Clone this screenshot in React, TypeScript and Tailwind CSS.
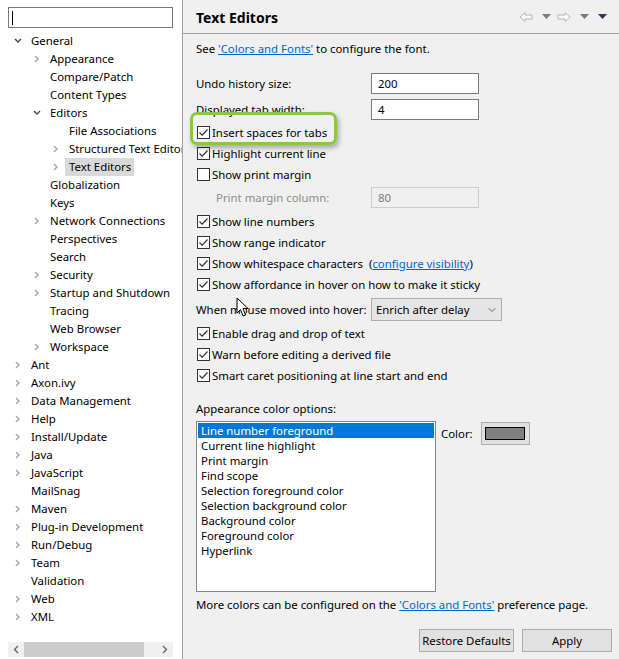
import { ChevronDown } from "lucide-react";

type TreeItem = {
  label: string;
  level: number;
  arrow: "open" | "closed" | "none";
  selected?: boolean;
};

const tree: TreeItem[] = [
  { label: "General", level: 0, arrow: "open" },
  { label: "Appearance", level: 1, arrow: "closed" },
  { label: "Compare/Patch", level: 1, arrow: "none" },
  { label: "Content Types", level: 1, arrow: "none" },
  { label: "Editors", level: 1, arrow: "open" },
  { label: "File Associations", level: 2, arrow: "none" },
  { label: "Structured Text Editors", level: 2, arrow: "closed" },
  { label: "Text Editors", level: 2, arrow: "closed", selected: true },
  { label: "Globalization", level: 1, arrow: "none" },
  { label: "Keys", level: 1, arrow: "none" },
  { label: "Network Connections", level: 1, arrow: "closed" },
  { label: "Perspectives", level: 1, arrow: "none" },
  { label: "Search", level: 1, arrow: "none" },
  { label: "Security", level: 1, arrow: "closed" },
  { label: "Startup and Shutdown", level: 1, arrow: "closed" },
  { label: "Tracing", level: 1, arrow: "none" },
  { label: "Web Browser", level: 1, arrow: "none" },
  { label: "Workspace", level: 1, arrow: "closed" },
  { label: "Ant", level: 0, arrow: "closed" },
  { label: "Axon.ivy", level: 0, arrow: "closed" },
  { label: "Data Management", level: 0, arrow: "closed" },
  { label: "Help", level: 0, arrow: "closed" },
  { label: "Install/Update", level: 0, arrow: "closed" },
  { label: "Java", level: 0, arrow: "closed" },
  { label: "JavaScript", level: 0, arrow: "closed" },
  { label: "MailSnag", level: 0, arrow: "none" },
  { label: "Maven", level: 0, arrow: "closed" },
  { label: "Plug-in Development", level: 0, arrow: "closed" },
  { label: "Run/Debug", level: 0, arrow: "closed" },
  { label: "Team", level: 0, arrow: "closed" },
  { label: "Validation", level: 0, arrow: "none" },
  { label: "Web", level: 0, arrow: "closed" },
  { label: "XML", level: 0, arrow: "closed" },
];

const colorOptions = [
  "Line number foreground",
  "Current line highlight",
  "Print margin",
  "Find scope",
  "Selection foreground color",
  "Selection background color",
  "Background color",
  "Foreground color",
  "Hyperlink",
];

const indent = ["pl-[12px]", "pl-[31px]", "pl-[50px]"];

function Arrow({ kind }: { kind: TreeItem["arrow"] }) {
  if (kind === "none") return <span className="w-[19px] shrink-0" />;
  if (kind === "open")
    return (
      <svg className="w-[19px] h-[18px] shrink-0" viewBox="0 0 19 18">
        <path d="M3 7 L6 10 L9 7" fill="none" stroke="#404040" strokeWidth="1.3" />
      </svg>
    );
  return (
    <svg className="w-[19px] h-[18px] shrink-0" viewBox="0 0 19 18">
      <path d="M4 6 L7 9 L4 12" fill="none" stroke="#a6a6a6" strokeWidth="1.4" />
    </svg>
  );
}

function Check({ checked = true, label, children }: { checked?: boolean; label: string; children?: React.ReactNode }) {
  return (
    <div className="flex h-[21px] items-center">
      <span className="ml-[1px] flex h-[13px] w-[13px] shrink-0 items-center justify-center border border-[#333] bg-white">
        {checked && (
          <svg width="11" height="11" viewBox="0 0 11 11">
            <path d="M1.5 5.5 L4.2 8.2 L9.5 2.5" fill="none" stroke="#333" strokeWidth="1.2" />
          </svg>
        )}
      </span>
      <span className="ml-[2px] whitespace-nowrap">{label}</span>
      {children}
    </div>
  );
}

function NavArrow({ flip }: { flip?: boolean }) {
  return (
    <svg width="14" height="12" viewBox="0 0 14 12" className={flip ? "-scale-x-100" : ""}>
      <path d="M1 6 L6 1.5 L6 4 L13 4 L13 8 L6 8 L6 10.5 Z" fill="#fafafa" stroke="#b4b4b4" strokeWidth="1" />
    </svg>
  );
}

function SmallDrop({ color = "#7a7a7a" }: { color?: string }) {
  return (
    <svg width="9" height="5" viewBox="0 0 9 5">
      <path d="M0 0 L9 0 L4.5 5 Z" fill={color} />
    </svg>
  );
}

export default function App() {
  return (
    <div className="relative flex h-[659px] w-[619px] overflow-hidden bg-[#f0f0f0] text-[11.4px] text-black [font-family:'Noto_Sans',sans-serif]">
      {/* left tree pane */}
      <div className="flex h-full w-[183px] shrink-0 flex-col overflow-hidden border-r border-[#a0a0a0] bg-white">
        <div className="ml-[8px] mt-[7px] flex h-[21px] w-[165px] shrink-0 items-center border border-[#7a7a7a] bg-white pl-[3px]">
          <span className="h-[14px] w-px bg-black" />
        </div>
        <div className="mt-[4px] flex flex-col">
          {tree.map((item) => (
            <div key={item.label} className={`flex h-[18px] items-center ${indent[item.level]}`}>
              <Arrow kind={item.arrow} />
              <span
                className={`whitespace-nowrap leading-[18px] ${item.selected ? "bg-[#d9d9d9] pl-[4px] pr-[3px] -ml-[4px]" : ""}`}
              >
                {item.label}
              </span>
            </div>
          ))}
        </div>
        <div className="mt-auto mb-[2px] ml-[8px] flex h-[15px] w-[165px] shrink-0 items-center bg-[#f0f0f0]">
          <span className="flex w-[16px] justify-center">
            <svg width="6" height="9" viewBox="0 0 6 9">
              <path d="M5 1 L1.5 4.5 L5 8" fill="none" stroke="#606060" strokeWidth="1.3" />
            </svg>
          </span>
          <span className="h-[15px] w-[120px] bg-[#cdcdcd]" />
          <span className="ml-auto flex w-[16px] justify-center">
            <svg width="6" height="9" viewBox="0 0 6 9">
              <path d="M1 1 L4.5 4.5 L1 8" fill="none" stroke="#606060" strokeWidth="1.3" />
            </svg>
          </span>
        </div>
      </div>

      {/* right preference page */}
      <div className="flex min-w-0 flex-1 flex-col">
        <div className="flex h-[34px] shrink-0 items-center border-b border-[#a0a0a0] pl-[13px] pr-[12px]">
          <span className="mt-[2px] text-[14px] font-bold">Text Editors</span>
          <div className="ml-auto flex items-center">
            <NavArrow />
            <span className="ml-[9px]"><SmallDrop /></span>
            <span className="ml-[6px]"><NavArrow flip /></span>
            <span className="ml-[9px]"><SmallDrop /></span>
            <span className="ml-[9px]"><SmallDrop color="#3b2a5c" /></span>
          </div>
        </div>

        <div className="flex flex-col pl-[13px] pr-[7px]">
          <div className="mt-[6px] h-[18px] leading-[18px]">
            See <span className="text-[#0066cc] underline">'Colors and Fonts'</span> to configure the font.
          </div>

          <div className="mt-[15px] flex h-[21px] items-center">
            <span className="w-[175px]">Undo history size:</span>
            <div className="flex h-[21px] w-[108px] items-center border border-[#7a7a7a] bg-white pl-[6px]">200</div>
          </div>
          <div className="mt-[5px] flex h-[21px] items-center">
            <span className="w-[175px]">Displayed tab width:</span>
            <div className="flex h-[21px] w-[108px] items-center border border-[#7a7a7a] bg-white pl-[6px]">4</div>
          </div>

          <div className="mt-[2px]">
            <Check label="Insert spaces for tabs" />
          </div>
          <Check label="Highlight current line" />
          <Check checked={false} label="Show print margin" />

          <div className="mt-[2px] flex h-[21px] items-center">
            <span className="w-[175px] pl-[20px] text-[#8c8c8c]">Print margin column:</span>
            <div className="flex h-[21px] w-[108px] items-center border border-[#cccccc] bg-[#f0f0f0] pl-[6px] text-[#7a7a7a]">80</div>
          </div>

          <div className="mt-[3px]">
            <Check label="Show line numbers" />
          </div>
          <Check label="Show range indicator" />
          <Check label="Show whitespace characters">
            <span className="ml-[6px] whitespace-nowrap">
              (<span className="text-[#0066cc] underline">configure visibility</span>)
            </span>
          </Check>
          <Check label="Show affordance in hover on how to make it sticky" />

          <div className="mt-[3px] flex h-[23px] items-center">
            <span className="w-[175px] whitespace-nowrap">When mouse moved into hover:</span>
            <div className="flex h-[23px] w-[131px] items-center border border-[#adadad] bg-[#e5e5e5] pl-[4px] pr-[3px]">
              <span>Enrich after delay</span>
              <ChevronDown className="ml-auto h-[12px] w-[12px] text-[#404040]" strokeWidth={1.5} />
            </div>
          </div>

          <div className="mt-[2px]">
            <Check label="Enable drag and drop of text" />
          </div>
          <Check label="Warn before editing a derived file" />
          <Check label="Smart caret positioning at line start and end" />

          <div className="mt-[14px] h-[18px] leading-[18px]">Appearance color options:</div>

          <div className="mt-[3px] flex items-start">
            <div className="h-[171px] w-[240px] border border-[#828790] bg-white p-px">
              {colorOptions.map((opt, i) => (
                <div
                  key={opt}
                  className={`h-[15px] pl-[3px] leading-[15px] ${i === 0 ? "bg-[#0078d7] text-white" : ""}`}
                >
                  {opt}
                </div>
              ))}
            </div>
            <span className="ml-[5px] mt-[4px]">Color:</span>
            <div className="ml-[8px] mt-px flex h-[23px] w-[49px] items-center justify-center border border-[#adadad] bg-[#e1e1e1]">
              <span className="h-[13px] w-[40px] border border-black bg-[#808080]" />
            </div>
          </div>

          <div className="mt-[4px] h-[18px] whitespace-nowrap leading-[18px]">
            More colors can be configured on the{" "}
            <span className="text-[#0066cc] underline">'Colors and Fonts'</span> preference page.
          </div>

          <div className="mt-[15px] flex justify-end gap-[8px]">
            <div className="flex h-[23px] w-[95px] items-center justify-center whitespace-nowrap border border-[#adadad] bg-[#e1e1e1]">
              Restore Defaults
            </div>
            <div className="flex h-[23px] w-[90px] items-center justify-center border border-[#adadad] bg-[#e1e1e1]">
              Apply
            </div>
          </div>
        </div>
      </div>

      {/* callout highlight overlay */}
      <div className="pointer-events-none absolute left-[190px] top-[112px] h-[33px] w-[147px] rounded-[7px] border-[3px] border-[#8dc63f] shadow-[2px_3px_5px_rgba(0,0,0,0.3)]" />

      {/* mouse pointer overlay */}
      <svg className="pointer-events-none absolute left-[236px] top-[297px]" width="14" height="22" viewBox="0 0 14 22">
        <path d="M1 1 L1 16 L4.5 12.5 L7 19 L9.5 18 L7 11.5 L12 11.5 Z" fill="white" stroke="black" strokeWidth="1" />
      </svg>
    </div>
  );
}
